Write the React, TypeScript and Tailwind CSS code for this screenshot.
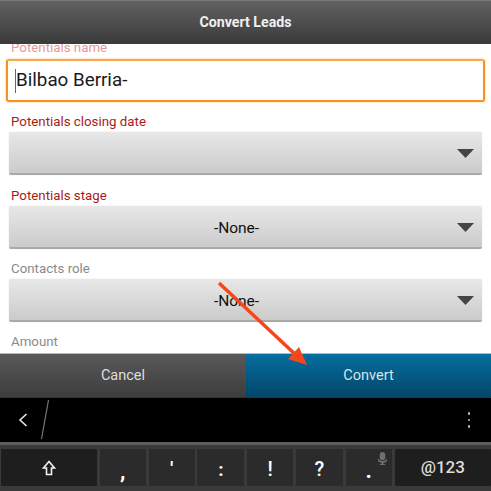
import { ReactNode } from "react";

const font = "font-['Roboto','Liberation_Sans',sans-serif]";

function Dropdown({ value }: { value?: string }) {
  return (
    <div className="relative mx-[9px] flex h-[43px] items-center justify-center rounded-[2px] border-b-2 border-[#a9a9a9] bg-gradient-to-b from-[#e8e8e8] to-[#cbcbcb] pr-[18px] pt-[4px] shadow-[0_0_1px_rgba(0,0,0,0.25)]">
      <span className="text-[15.5px] text-[#111]">{value}</span>
      <svg className="absolute right-[8px] top-[17px]" width="17" height="9" viewBox="0 0 17 9">
        <polygon points="0,0 17,0 8.5,9" fill="#444" />
      </svg>
    </div>
  );
}

function Label({ children, required = false }: { children: ReactNode; required?: boolean }) {
  return (
    <div className={`ml-[11px] h-5 text-[13.3px] leading-[20px] ${required ? "text-[#a81b1b]" : "text-[#8a8a8a]"}`}>
      {children}
    </div>
  );
}

function Key({ width, dark = false, children }: { width: string; dark?: boolean; children: ReactNode }) {
  return (
    <div className={`relative flex h-[37px] items-center justify-center rounded-[1px] text-white ${width} ${dark ? "bg-[#1e1e1e]" : "bg-[#2b2b2b]"}`}>
      {children}
    </div>
  );
}

export default function App() {
  return (
    <div className={`relative flex h-[491px] w-[491px] flex-col overflow-hidden bg-white ${font}`}>
      <header className="flex h-[44px] shrink-0 items-center justify-center border-t border-[#777] bg-gradient-to-b from-[#626262] to-[#3a3a3a] text-[14.2px] font-bold text-[#f0f0f0]">
        Convert Leads
      </header>

      <main className="h-[309px] shrink-0 overflow-hidden bg-white">
        <div className="ml-[11px] -mt-[6px] h-[21px] text-[13.3px] leading-5 text-[#e39a9a]">Potentials name</div>
        <div className="mx-[6px] flex h-[43px] items-center rounded-[3px] border-2 border-[#fb8f1e] border-t-[#fba94f] bg-white pl-[7px] shadow-[0_0_2px_rgba(251,143,30,0.7)]">
          <span className="h-[24px] w-px bg-[#666]" />
          <span className="text-[18.8px] text-[#1a1a1a]">Bilbao Berria-</span>
        </div>
        <div className="mt-[10px]">
          <Label required>Potentials closing date</Label>
          <Dropdown />
        </div>
        <div className="mt-[11px]">
          <Label required>Potentials stage</Label>
          <Dropdown value="-None-" />
        </div>
        <div className="mt-[10px]">
          <Label>Contacts role</Label>
          <Dropdown value="-None-" />
        </div>
        <div className="mt-[10px]">
          <Label>Amount</Label>
        </div>
      </main>

      <div className="flex h-[44px] shrink-0 border-t border-[#9fc3d3] text-[14.5px]">
        <div className="flex w-[246px] items-center justify-center bg-gradient-to-b from-[#5a5a5a] to-[#3d3d3d] pt-px text-[#dedede]">Cancel</div>
        <div className="flex flex-1 items-center justify-center bg-gradient-to-b from-[#066f9f] to-[#02466a] pt-px text-[#d7e3e9]">Convert</div>
      </div>

      <div className="flex h-[45px] shrink-0 items-center justify-between border-t border-[#333] bg-black pl-[18px] pr-[21px]">
        <div className="flex items-center">
          <svg width="10" height="16" viewBox="0 0 10 16" fill="none" stroke="#e8e8e8" strokeWidth="1.6">
            <path d="M8.5 2 L2 8 L8.5 14" />
          </svg>
          <svg className="ml-[12px]" width="10" height="40" viewBox="0 0 10 40" stroke="#777" strokeWidth="1.2">
            <line x1="8.5" y1="0" x2="1.5" y2="39" />
          </svg>
        </div>
        <div className="flex flex-col gap-[4px]">
          <span className="h-[2.5px] w-[2.5px] rounded-full bg-[#bdbdbd]" />
          <span className="h-[2.5px] w-[2.5px] rounded-full bg-[#bdbdbd]" />
          <span className="h-[2.5px] w-[2.5px] rounded-full bg-[#bdbdbd]" />
        </div>
      </div>

      <div className="flex flex-1 flex-col border-t-[3px] border-[#5b5f60] bg-[#3a3a3a] pt-[4px]">
        <div className="flex gap-[2.8px] pl-px">
          <Key width="w-[96px]" dark>
            <svg width="14" height="16" viewBox="0 0 14 16" fill="none" stroke="#f2f2f2" strokeWidth="1.6">
              <path d="M7 1.5 L12.5 8 H9.5 V14.5 H4.5 V8 H1.5 Z" />
            </svg>
          </Key>
          <Key width="w-[46px]"><span className="absolute top-[11px] text-[22px] font-bold leading-6">,</span></Key>
          <Key width="w-[46px]"><span className="absolute top-[8px] text-[18px] font-bold leading-6">'</span></Key>
          <Key width="w-[47px]"><span className="pt-[4px] text-[19px] font-bold leading-6">:</span></Key>
          <Key width="w-[46px]"><span className="pt-[3px] text-[20px] font-medium leading-6">!</span></Key>
          <Key width="w-[47px]"><span className="pt-[3px] text-[20px] font-medium leading-6">?</span></Key>
          <Key width="w-[46px]">
            <span className="absolute top-[10px] text-[22px] font-bold leading-6">.</span>
            <svg className="absolute right-[4px] top-[3px]" width="11" height="13" viewBox="0 0 12 14" fill="#6f6f6f">
              <rect x="3" y="0" width="6" height="9" rx="3" />
              <path d="M1 6 C1 11 11 11 11 6 V8 C11 11 8 11.5 7 11.5 V13 H9 V14 H3 V13 H5 V11.5 C4 11.5 1 11 1 8 Z" />
            </svg>
          </Key>
          <Key width="flex-1" dark><span className="pt-px text-[17px] font-medium text-[#dcdcdc]">@123</span></Key>
        </div>
      </div>

      <svg className="absolute left-[215px] top-[278px]" width="100" height="92" viewBox="215 278 100 92">
        <line x1="219" y1="283" x2="297" y2="356" stroke="#f4481c" strokeWidth="3.5" />
        <polygon points="307,365 288,359 299,347" fill="#f4481c" />
      </svg>
    </div>
  );
}
